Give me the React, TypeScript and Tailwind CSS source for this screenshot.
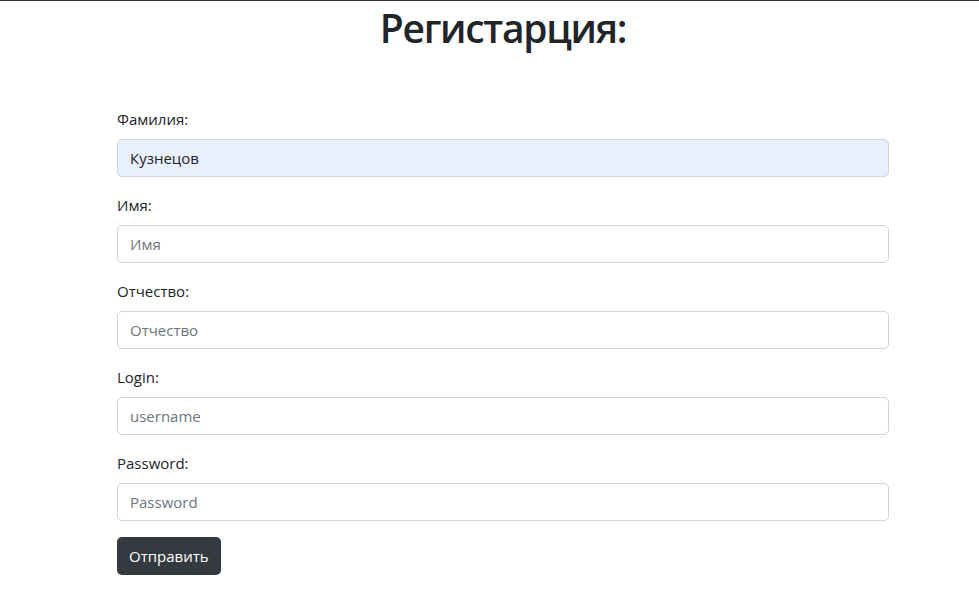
import React from "react";

const fields = [
  { label: "Фамилия:", placeholder: "Фамилия", value: "Кузнецов", type: "text" },
  { label: "Имя:", placeholder: "Имя", value: "", type: "text" },
  { label: "Отчество:", placeholder: "Отчество", value: "", type: "text" },
  { label: "Login:", placeholder: "username", value: "", type: "text" },
  { label: "Password:", placeholder: "Password", value: "", type: "password" },
];

export default function App() {
  const [values, setValues] = React.useState(fields.map(f => f.value));

  return (
    <div
      className="min-h-[616px] bg-white border-t border-[#333] text-[#212529]"
      style={{ fontFamily: '"Open Sans", "Noto Sans", sans-serif' }}
    >
      <h1 className="text-center text-[39px] font-semibold leading-[48px] ml-[27px] pt-[3px] mb-[55px] tracking-[-1.3px]">
        Регистарция:
      </h1>
      <form className="ml-[117px] w-[772px]" onSubmit={e => e.preventDefault()}>
        {fields.map((f, i) => (
          <div key={f.label} className="mb-4">
            <label className="block text-[15px] leading-6 mb-2">{f.label}</label>
            <input
              type={f.type}
              value={values[i]}
              placeholder={f.placeholder}
              onChange={e => {
                const next = [...values];
                next[i] = e.target.value;
                setValues(next);
              }}
              className={
                "block w-full h-[38px] px-3 text-[15px] border border-[#ced4da] rounded-[5px] placeholder:text-[#6c757d] focus:outline-none " +
                (values[i] && i === 0 ? "bg-[#e8f0fe]" : "bg-white")
              }
            />
          </div>
        ))}
        <button
          type="submit"
          className="h-[38px] px-3 bg-[#343a40] text-white text-[15px] rounded-[5px]"
        >
          Отправить
        </button>
      </form>
    </div>
  );
}
